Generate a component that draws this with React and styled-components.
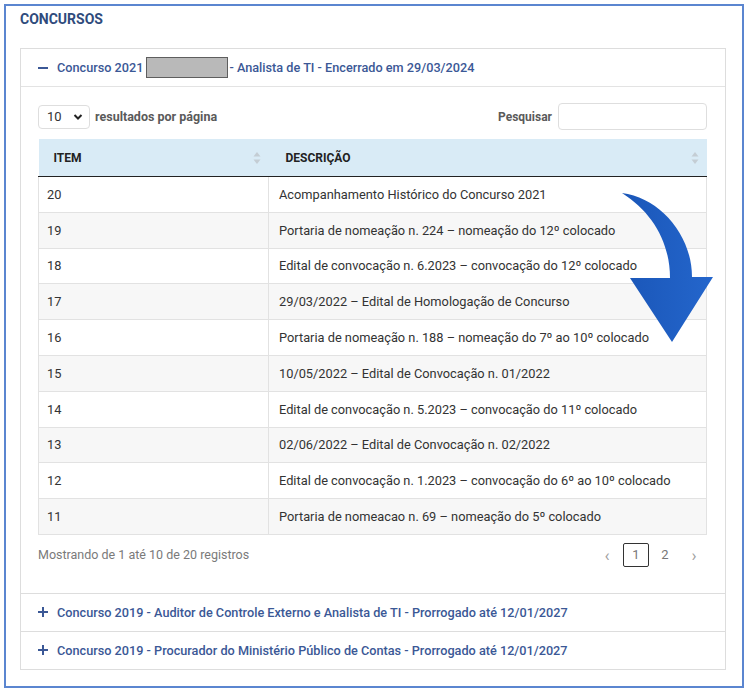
import styled, { createGlobalStyle } from "styled-components";

const rows = [
  [20, "Acompanhamento Histórico do Concurso 2021"],
  [19, "Portaria de nomeação n. 224 – nomeação do 12º colocado"],
  [18, "Edital de convocação n. 6.2023 – convocação do 12º colocado"],
  [17, "29/03/2022 – Edital de Homologação de Concurso"],
  [16, "Portaria de nomeação n. 188 – nomeação do 7º ao 10º colocado"],
  [15, "10/05/2022 – Edital de Convocação n. 01/2022"],
  [14, "Edital de convocação n. 5.2023 – convocação do 11º colocado"],
  [13, "02/06/2022 – Edital de Convocação n. 02/2022"],
  [12, "Edital de convocação n. 1.2023 – convocação do 6º ao 10º colocado"],
  [11, "Portaria de nomeacao n. 69 – nomeação do 5º colocado"],
];

const closedPanels = [
  "Concurso 2019 - Auditor de Controle Externo e Analista de TI - Prorrogado até 12/01/2027",
  "Concurso 2019 - Procurador do Ministério Público de Contas - Prorrogado até 12/01/2027",
];

const GlobalStyle = createGlobalStyle`
  body {
    margin: 0;
    background: #fff;
    font-family: Roboto, "Liberation Sans", Arial, sans-serif;
  }
`;

const Page = styled.div`
  position: relative;
  width: 748px;
  height: 692px;
  padding: 4px;
  box-sizing: border-box;
`;

const Frame = styled.section`
  height: 100%;
  box-sizing: border-box;
  border: 2px solid #5b86d0;
  padding: 5px 16px 0 14px;
`;

const Title = styled.h2`
  margin: 0 0 21px;
  font-size: 14px;
  line-height: 16px;
  font-weight: 700;
  color: #2f4b7c;
`;

const Accordion = styled.div`
  border: 1px solid #ddd;
`;

const Panel = styled.div`
  & + & {
    border-top: 1px solid #ddd;
  }
`;

const PanelHeader = styled.div`
  height: 37px;
  display: flex;
  align-items: center;
  gap: 9px;
  padding-left: 17px;
  font-size: 12.7px;
  font-weight: 500;
  color: #3b5896;
  border-bottom: ${(p) => (p.$open ? "1px solid #e3e3e3" : "none")};
`;

const Minus = styled.span`
  width: 10px;
  height: 2px;
  background: #3b5896;
`;

const Plus = styled.span`
  position: relative;
  width: 10px;
  height: 10px;

  &::before,
  &::after {
    content: "";
    position: absolute;
    background: #3b5896;
  }
  &::before {
    left: 0;
    top: 4px;
    width: 10px;
    height: 2px;
  }
  &::after {
    left: 4px;
    top: 0;
    width: 2px;
    height: 10px;
  }
`;

const HeaderText = styled.span`
  display: flex;
  align-items: center;
  white-space: nowrap;
`;

const Redacted = styled.span`
  display: inline-block;
  width: 80px;
  height: 19px;
  margin: 0 1px 0 3px;
  background: #b9b9b9;
  border: 1px solid #5e5e5e;
`;

const PanelBody = styled.div`
  padding: 16px 18px 26px 17px;
`;

const Controls = styled.div`
  display: flex;
  justify-content: space-between;
  align-items: center;
  height: 27px;
  font-size: 12px;
  font-weight: 700;
  color: #5a5a5a;
`;

const Group = styled.label`
  display: flex;
  align-items: center;
  gap: ${(p) => p.$gap || 5}px;
  font-size: ${(p) => p.$size || 12}px;
`;

const Select = styled.div`
  width: 52px;
  height: 24px;
  box-sizing: border-box;
  display: flex;
  align-items: center;
  justify-content: space-between;
  padding: 0 6px 0 8px;
  border: 1px solid #dedede;
  border-radius: 4px;
  font-size: 13px;
  font-weight: 400;
  color: #333;
`;

const SearchBox = styled.div`
  width: 149px;
  height: 27px;
  box-sizing: border-box;
  border: 1px solid #dedede;
  border-radius: 4px;
`;

const Table = styled.table`
  width: 100%;
  margin-top: 9px;
  border-collapse: collapse;
  table-layout: fixed;
  font-size: 12.8px;
  color: #333;
`;

const Th = styled.th`
  height: 37px;
  padding: 0 8px 0 ${(p) => p.$pad}px;
  background: #d9ebf6;
  border-bottom: 1px solid #222;
  text-align: left;
  font-size: 12px;
  font-weight: 700;
  color: #222;
  width: ${(p) => p.$width || "auto"};
`;

const ThInner = styled.div`
  display: flex;
  align-items: center;
  justify-content: space-between;
`;

const Tr = styled.tr`
  height: 35.8px;
  background: #fff;

  &:nth-child(even) {
    background: #f7f7f7;
  }
`;

const Td = styled.td`
  padding: 0 8px 0 ${(p) => p.$pad}px;
  border: 1px solid #e2e2e2;
  white-space: nowrap;
`;

const Footer = styled.div`
  display: flex;
  justify-content: space-between;
  align-items: center;
  margin-top: 8px;
  height: 24px;
  font-size: 12.5px;
  color: #7a7a7a;
`;

const Pager = styled.div`
  display: flex;
  gap: 3px;
`;

const PageButton = styled.span`
  width: 26px;
  height: 24px;
  box-sizing: border-box;
  display: flex;
  align-items: center;
  justify-content: center;
  font-size: ${(p) => (p.$arrow ? 17 : 13)}px;
  color: ${(p) => (p.$arrow ? "#a0a0a0" : "#777")};
  border: 1px solid ${(p) => (p.$active ? "#333" : "transparent")};
  border-radius: 2px;
`;

const Arrow = styled.svg`
  position: absolute;
  left: 610px;
  top: 180px;
  width: 110px;
  height: 175px;
  pointer-events: none;
`;

const SortIcon = () => (
  <svg width="8" height="14" viewBox="0 0 8 14">
    <path d="M4 1 L7.5 5.5 L0.5 5.5 Z" fill="#c4cdd4" />
    <path d="M4 13 L7.5 8.5 L0.5 8.5 Z" fill="#c4cdd4" />
  </svg>
);

const Chevron = () => (
  <svg width="10" height="10" viewBox="0 0 10 10">
    <path d="M1.5 3 L5 6.5 L8.5 3" fill="none" stroke="#222" strokeWidth="2" />
  </svg>
);

export default function App() {
  return (
    <Page>
      <GlobalStyle />
      <Frame>
        <Title>CONCURSOS</Title>
        <Accordion>
          <Panel>
            <PanelHeader $open>
              <Minus />
              <HeaderText>
                Concurso 2021
                <Redacted />- Analista de TI - Encerrado em 29/03/2024
              </HeaderText>
            </PanelHeader>
            <PanelBody>
              <Controls>
                <Group $size={12.5}>
                  <Select>
                    10
                    <Chevron />
                  </Select>
                  resultados por página
                </Group>
                <Group $gap={6}>
                  Pesquisar
                  <SearchBox />
                </Group>
              </Controls>

              <Table>
                <colgroup>
                  <col style={{ width: 230 }} />
                  <col />
                </colgroup>
                <thead>
                  <tr>
                    <Th $pad={15}>
                      <ThInner>
                        ITEM
                        <SortIcon />
                      </ThInner>
                    </Th>
                    <Th $pad={17}>
                      <ThInner>
                        DESCRIÇÃO
                        <SortIcon />
                      </ThInner>
                    </Th>
                  </tr>
                </thead>
                <tbody>
                  {rows.map(([item, text]) => (
                    <Tr key={item}>
                      <Td $pad={8}>{item}</Td>
                      <Td $pad={10}>{text}</Td>
                    </Tr>
                  ))}
                </tbody>
              </Table>

              <Footer>
                Mostrando de 1 até 10 de 20 registros
                <Pager>
                  <PageButton $arrow>‹</PageButton>
                  <PageButton $active>1</PageButton>
                  <PageButton>2</PageButton>
                  <PageButton $arrow>›</PageButton>
                </Pager>
              </Footer>
            </PanelBody>
          </Panel>

          {closedPanels.map((label) => (
            <Panel key={label}>
              <PanelHeader>
                <Plus />
                <HeaderText>{label}</HeaderText>
              </PanelHeader>
            </Panel>
          ))}
        </Accordion>
      </Frame>

      {/* curved pointer over the table */}
      <Arrow viewBox="0 0 110 175">
        <defs>
          <linearGradient id="arrowFill" x1="0" y1="0" x2="1" y2="0">
            <stop offset="0" stopColor="#1a56b8" />
            <stop offset="1" stopColor="#2466cc" />
          </linearGradient>
        </defs>
        <path
          d="M12 13 C 50 18, 82 55, 82 97 L 103 97 L 62 162 L 20 98 L 60 98 C 60 62, 42 32, 12 13 Z"
          fill="url(#arrowFill)"
        />
      </Arrow>
    </Page>
  );
}
